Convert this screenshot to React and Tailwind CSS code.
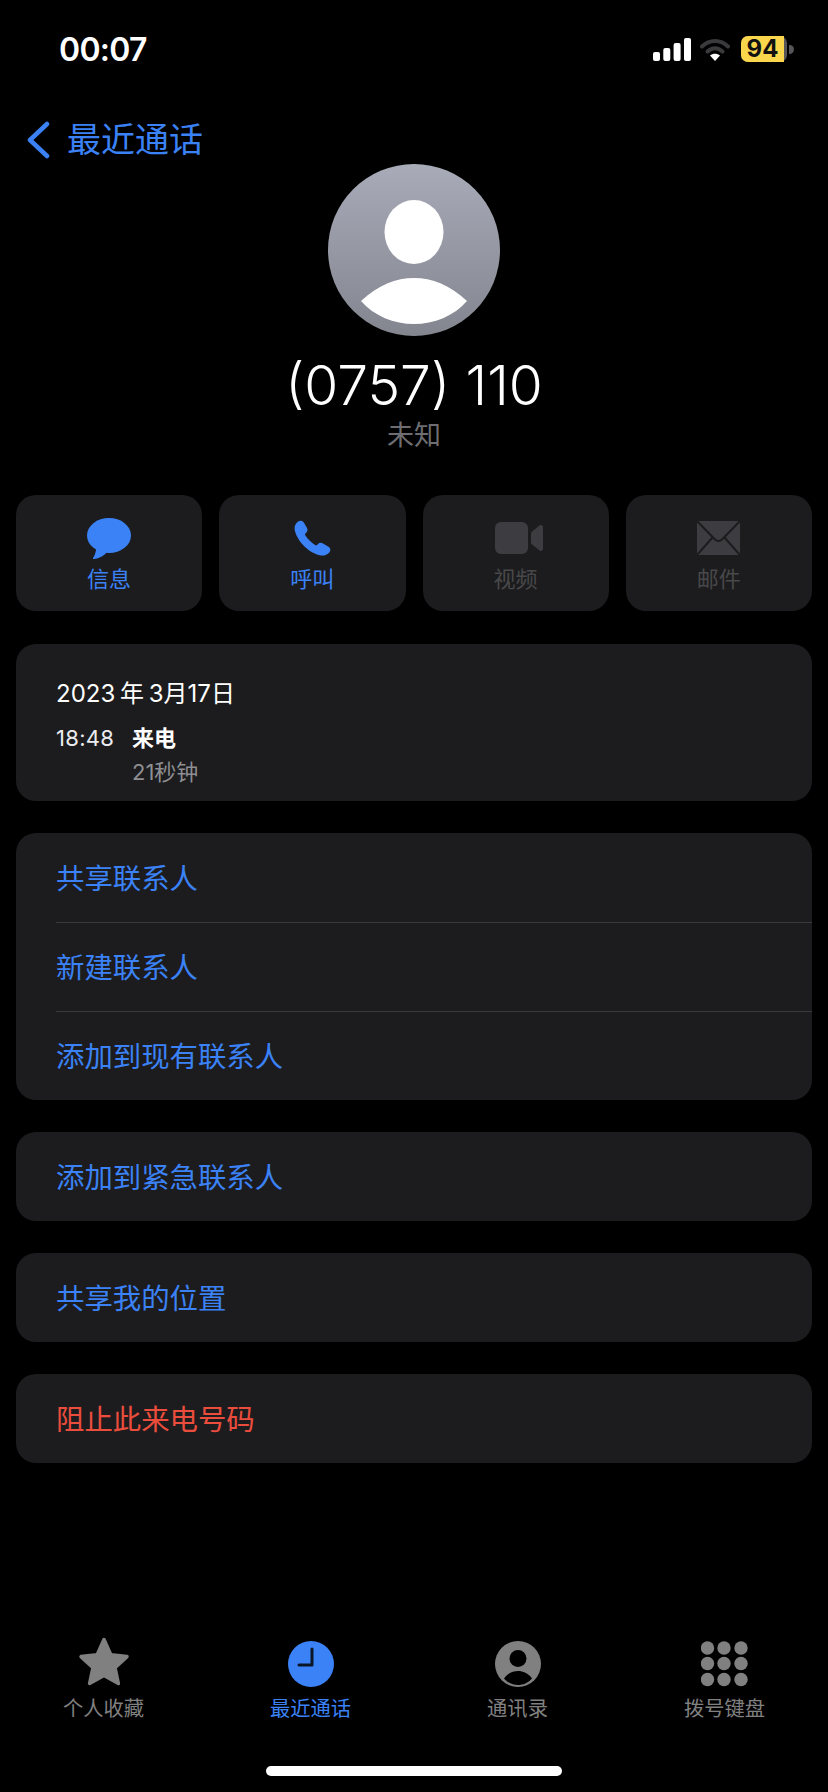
const FONT = "font-['Inter','Noto_Sans_CJK_SC',sans-serif]";

const listGroups = [
  { rows: ["共享联系人", "新建联系人", "添加到现有联系人"] },
  { rows: ["添加到紧急联系人"] },
  { rows: ["共享我的位置"] },
  { rows: ["阻止此来电号码"], danger: true },
];

const Signal = () => (
  <svg width="38" height="23" viewBox="0 0 38 23" fill="#fff">
    <rect x="0" y="14" width="7" height="9" rx="2" />
    <rect x="10.3" y="10" width="7" height="13" rx="2" />
    <rect x="20.6" y="5" width="7" height="18" rx="2" />
    <rect x="31" y="0" width="7" height="23" rx="2" />
  </svg>
);

const Wifi = () => (
  <svg width="30" height="23" viewBox="0 0 30 23" fill="none">
    <path d="M2 8.5C9.5 1 20.5 1 28 8.5" stroke="#3a3a3c" strokeWidth="4" strokeLinecap="round" />
    <path d="M7.5 13.5C12 9 18 9 22.5 13.5" stroke="#3a3a3c" strokeWidth="4" strokeLinecap="round" />
    <path d="M10 17.6C12.8 15 17.2 15 20 17.6L15 23Z" fill="#fff" />
  </svg>
);

const Battery = () => (
  <div className="flex items-center">
    <div className="h-[26px] w-[46px] rounded-[7px] bg-[#55555a]">
      <div className="flex h-[26px] w-[43px] items-center justify-center rounded-l-[7px] bg-[#f9d64c]">
        <span className="text-[24px] leading-none font-bold text-[#111]">94</span>
      </div>
    </div>
    <div className="ml-[2px] h-[9px] w-[5px] rounded-r-full bg-[#55555a]" />
  </div>
);

const Avatar = () => (
  <svg width="172" height="172" viewBox="0 0 172 172">
    <defs>
      <linearGradient id="avatarFill" x1="0" y1="0" x2="0" y2="1">
        <stop offset="0" stopColor="#a8abb8" />
        <stop offset="1" stopColor="#83868f" />
      </linearGradient>
    </defs>
    <circle cx="86" cy="86" r="86" fill="url(#avatarFill)" />
    <ellipse cx="86" cy="68" rx="29.5" ry="32" fill="#fff" />
    <path d="M33 137C50 121 68 114 86 114C104 114 122 121 139 137C126 152 106 160 86 160C66 160 46 152 33 137Z" fill="#fff" />
  </svg>
);

const Bubble = () => (
  <svg width="44" height="41" viewBox="0 0 44 41" fill="#3b82f6">
    <ellipse cx="22" cy="17.5" rx="22" ry="17.5" />
    <path d="M9 28C9.5 33 8 37 6 40C5.6 41 6.6 41.2 7.5 41C12 40.4 17 38 20 34Z" />
  </svg>
);

const Phone = () => (
  <svg width="37" height="36" viewBox="0 0 37 36" fill="#3b82f6">
    <path d="M4 1.5C6 0 8.5 .5 9.8 2.5L13 8C14 10 13.5 11.5 12 13L10.8 14.2C12.5 18 18 23.5 22.5 25.5L24 24C25.5 22.5 27 22.2 29 23.4L34.5 26.8C36.5 28 37 30.5 35.5 32.2C33 35 30 36 27 35.5C15 33.5 3 21 .7 10C0 6.5 1.5 3.5 4 1.5Z" />
  </svg>
);

const Video = () => (
  <svg className="ml-[6px]" width="48" height="32" viewBox="0 0 48 32" fill="#3d3d41">
    <rect x="0" y="0" width="33" height="32" rx="6" />
    <path d="M36 11.5C36 10.8 36.3 10.2 36.9 9.7L44.5 3.6C46 2.5 48 3.4 48 5.3V26.7C48 28.6 46 29.5 44.5 28.4L36.9 22.3C36.3 21.8 36 21.2 36 20.5Z" />
  </svg>
);

const Mail = () => (
  <svg width="43" height="34" viewBox="0 0 43 34">
    <rect x="0" y="0" width="43" height="34" rx="2" fill="#3d3d41" />
    <path d="M0 0L17.5 18C20 20.5 23 20.5 25.5 18L43 0M0 34L15.5 16.5M43 34L27.5 16.5" fill="none" stroke="#1c1c1e" strokeWidth="2" />
  </svg>
);

const Star = () => (
  <svg width="52" height="50" viewBox="0 0 52 50" fill="#808080" stroke="#808080" strokeWidth="3.5" strokeLinejoin="round">
    <path d="M26 2.5L32.8 17.8 49 19.6 37 30.6 40.4 46.5 26 38.4 11.6 46.5 15 30.6 3 19.6 19.2 17.8Z" />
  </svg>
);

const Clock = () => (
  <svg width="46" height="46" viewBox="0 0 46 46">
    <circle cx="23" cy="23" r="23" fill="#3b82f6" />
    <path d="M24 8V24H11" fill="none" stroke="#0b1626" strokeWidth="3" strokeLinecap="round" strokeLinejoin="round" />
  </svg>
);

const Contact = () => (
  <svg width="46" height="46" viewBox="0 0 46 46">
    <circle cx="23" cy="23" r="23" fill="#808080" />
    <circle cx="23" cy="17.5" r="8.5" fill="#000" />
    <path d="M9 37.5C13 32 18 30 23 30C28 30 33 32 37 37.5C33 42 28 44 23 44C18 44 13 42 9 37.5Z" fill="#000" />
  </svg>
);

const Keypad = () => (
  <svg width="47" height="46" viewBox="0 0 47 46" fill="#808080">
    {[6.5, 23, 40].map((cx) =>
      [7, 22.5, 38.5].map((cy) => <circle key={`${cx}-${cy}`} cx={cx} cy={cy} r="6.7" />)
    )}
  </svg>
);

const actions = [
  { label: "信息", icon: <Bubble />, on: true },
  { label: "呼叫", icon: <Phone />, on: true },
  { label: "视频", icon: <Video /> },
  { label: "邮件", icon: <Mail /> },
];

const tabs = [
  { label: "个人收藏", icon: <Star /> },
  { label: "最近通话", icon: <Clock />, on: true },
  { label: "通讯录", icon: <Contact /> },
  { label: "拨号键盘", icon: <Keypad /> },
];

export default function App() {
  return (
    <div className={`${FONT} flex h-[1792px] w-[828px] flex-col overflow-hidden bg-black text-white`}>
      {/* status bar */}
      <div className="flex h-[100px] items-start justify-between pt-[36px] pr-[34px] pl-[59px]">
        <span className="pt-[1px] text-[32px] leading-[26px] font-semibold tracking-[-0.7px]">00:07</span>
        <div className="flex items-center">
          <Signal />
          <div className="ml-[9px]"><Wifi /></div>
          <div className="ml-[11px]"><Battery /></div>
        </div>
      </div>

      {/* back link */}
      <div className="flex h-[64px] items-start gap-[17px] pt-[16px] pl-[26px] text-[#3b82f6]">
        <svg width="24" height="38" viewBox="0 0 24 38" fill="none" className="mt-[5px]">
          <path d="M21 3L4 19L21 35" stroke="currentColor" strokeWidth="4.5" strokeLinecap="round" strokeLinejoin="round" />
        </svg>
        <span className="text-[34px] leading-[48px]">最近通话</span>
      </div>

      {/* contact header */}
      <div className="flex flex-col items-center">
        <Avatar />
        <div className="mt-[15px] text-[55px] leading-[68px] font-light">(0757) 110</div>
        <div className="mt-[-1px] text-[27px] leading-[36px] text-[#6e6e72]">未知</div>
      </div>

      <div className="mt-[41px] grid grid-cols-4 gap-[17px] px-[16px]">
        {actions.map((a) => (
          <div key={a.label} className="flex h-[116px] flex-col items-center rounded-[20px] bg-[#1c1c1e]">
            <div className="mt-[22px] flex h-[42px] items-center">{a.icon}</div>
            <span className={`mt-[5px] text-[22px] leading-[30px] ${a.on ? "text-[#3b82f6]" : "text-[#48484a]"}`}>{a.label}</span>
          </div>
        ))}
      </div>

      {/* call details */}
      <div className="mx-[16px] mt-[33px] h-[157px] rounded-[20px] bg-[#1c1c1e] pt-[34px] pl-[40px]">
        <div className="text-[24px] leading-[32px] [word-spacing:-2px]">2023 年 3月17日</div>
        <div className="mt-[12px] flex">
          <span className="w-[76px] text-[22px] leading-[32px] tracking-[0.3px] text-[#ebebf0]">18:48</span>
          <div>
            <div className="text-[22px] leading-[32px] font-bold">来电</div>
            <div className="mt-[2px] text-[22px] leading-[32px] text-[#8e8e93]">21秒钟</div>
          </div>
        </div>
      </div>

      {/* action lists */}
      <div className="mt-[32px] flex flex-col gap-[32px] px-[16px]">
        {listGroups.map((group) => (
          <div key={group.rows[0]} className="rounded-[20px] bg-[#1c1c1e] pl-[40px]">
            {group.rows.map((row, i) => (
              <div
                key={row}
                className={`flex h-[89px] items-center pt-[3px] text-[28.4px] ${group.danger ? "text-[#eb4d3d]" : "text-[#3b82f6]"} ${i > 0 ? "border-t border-[#3a3a3c]" : ""}`}
              >
                {row}
              </div>
            ))}
          </div>
        ))}
      </div>

      {/* tab bar */}
      <div className="mt-auto grid grid-cols-4">
        {tabs.map((t) => (
          <div key={t.label} className="flex flex-col items-center">
            <div className="flex h-[50px] items-end">{t.icon}</div>
            <span className={`mt-[7px] text-[20.3px] leading-[30px] ${t.on ? "text-[#3b82f6]" : "text-[#808080]"}`}>{t.label}</span>
          </div>
        ))}
      </div>
      <div className="mt-[42px] mb-[16px] h-[10px] w-[296px] self-center rounded-full bg-white" />
    </div>
  );
}
